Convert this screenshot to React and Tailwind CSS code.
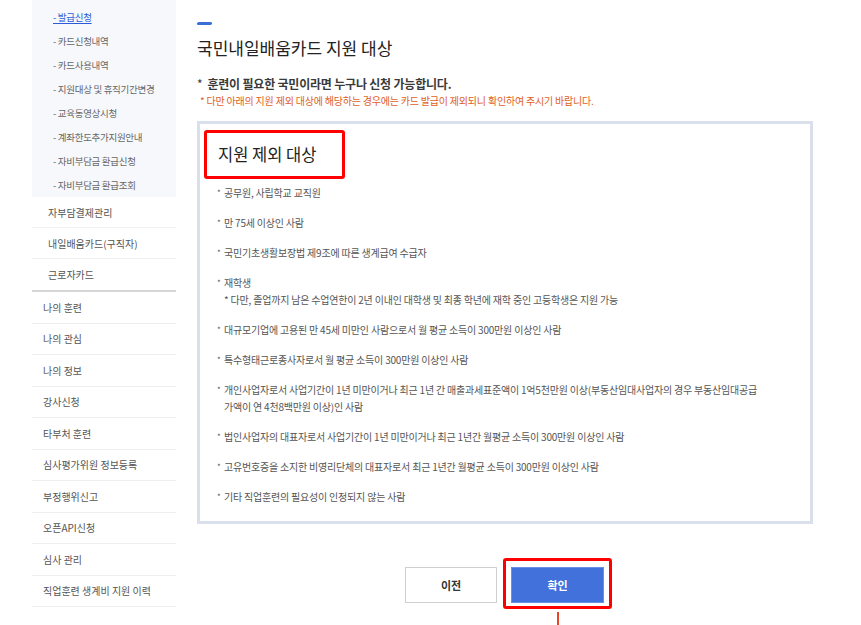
import React from 'react'

const SUB = [
    '- 발급신청',
    '- 카드신청내역',
    '- 카드사용내역',
    '- 지원대상 및 휴직기간변경',
    '- 교육동영상시청',
    '- 계좌한도추가지원안내',
    '- 자비부담금 환급신청',
    '- 자비부담금 환급조회',
]

const LEVEL2 = ['자부담결제관리', '내일배움카드(구직자)', '근로자카드']

const TOP = [
    '나의 훈련',
    '나의 관심',
    '나의 정보',
    '강사신청',
    '타부처 훈련',
    '심사평가위원 정보등록',
    '부정행위신고',
    '오픈API신청',
    '심사 관리',
    '직업훈련 생계비 지원 이력',
]

// each entry = rendered lines of one bullet
const EXCLUDED = [
    ['공무원, 사립학교 교직원'],
    ['만 75세 이상인 사람'],
    ['국민기초생활보장법 제9조에 따른 생계급여 수급자'],
    ['재학생', '* 다만, 졸업까지 남은 수업연한이 2년 이내인 대학생 및 최종 학년에 재학 중인 고등학생은 지원 가능'],
    ['대규모기업에 고용된 만 45세 미만인 사람으로서 월 평균 소득이 300만원 이상인 사람'],
    ['특수형태근로종사자로서 월 평균 소득이 300만원 이상인 사람'],
    ['개인사업자로서 사업기간이 1년 미만이거나 최근 1년 간 매출과세표준액이 1억5천만원 이상(부동산임대사업자의 경우 부동산임대공급', '가액이 연 4천8백만원 이상)인 사람'],
    ['법인사업자의 대표자로서 사업기간이 1년 미만이거나 최근 1년간 월평균 소득이 300만원 이상인 사람'],
    ['고유번호증을 소지한 비영리단체의 대표자로서 최근 1년간 월평균 소득이 300만원 이상인 사람'],
    ['기타 직업훈련의 필요성이 인정되지 않는 사람'],
]

function Sidebar() {
    return (
        <aside className="ml-[32px] w-[144px] shrink-0">
            {/* sub menu */}
            <ul className="bg-[#f6f8fc] pt-[5px]">
                {SUB.map((s, i) => (
                    <li key={s} className="h-[24px] flex items-center pl-[21px] text-[9.5px] tracking-[-0.3px]">
                        <span className={i === 0 ? 'text-[#2a5bd8] underline underline-offset-2' : 'text-[#666]'}>{s}</span>
                    </li>
                ))}
            </ul>
            <ul>
                {LEVEL2.map((s, i) => (
                    <li key={s}
                        className={`h-[31px] flex items-center pl-[16px] text-[10px] text-[#555] ${i < 2 ? 'border-b border-[#f0f0f0]' : ''}`}>
                        {s}
                    </li>
                ))}
            </ul>
            <div className="h-[2px] bg-[#d6d6d6]" />
            <ul>
                {TOP.map(s => (
                    <li key={s} className="h-[31.5px] flex items-center pl-[11px] text-[10px] text-[#555] border-b border-[#eeeeee]">
                        {s}
                    </li>
                ))}
            </ul>
        </aside>
    )
}

export default function App() {
    return (
        <div className="w-[861px] h-[625px] overflow-hidden bg-white flex" style={{ fontFamily: '"Noto Sans CJK KR", "Noto Sans", sans-serif' }}>
            <Sidebar />

            <main className="ml-[21px] w-[616px] shrink-0">
                <div className="mt-[22px] w-[15px] h-[3px] bg-[#3b6fd8] rounded-sm -skew-x-12" />
                <h1 className="mt-[11px] text-[17px] leading-[24px] text-[#222] font-normal">국민내일배움카드 지원 대상</h1>

                <p className="mt-[16px] text-[12px] leading-[16px] font-bold text-[#3a3a3a] tracking-[-0.2px]">
                    <span className="font-normal mr-[5px]">*</span>훈련이 필요한 국민이라면 누구나 신청 가능합니다.
                </p>
                <p className="mt-[2px] ml-[3px] text-[10px] leading-[14px] text-[#e0601e] tracking-[-0.2px]">
                    * 다만 아래의 지원 제외 대상에 해당하는 경우에는 카드 발급이 제외되니 확인하여 주시기 바랍니다.
                </p>

                {/* exclusion box */}
                <section className="mt-[13px] h-[403px] border-[3px] border-[#d9e0ec] pt-[6px] pl-[4px] pr-[8px]">
                    <div className="w-[141px] h-[49px] border-[3px] border-[#ff0000] rounded-[3px] flex items-center pl-[11px]">
                        <h2 className="text-[16.5px] text-[#222] font-normal">지원 제외 대상</h2>
                    </div>
                    <ul className="mt-[5px] pl-[13px] flex flex-col gap-[13px]">
                        {EXCLUDED.map(lines => (
                            <li key={lines[0]} className="flex text-[10px] leading-[17px] text-[#555] tracking-[-0.2px]">
                                <span className="w-[7px] shrink-0 text-[8px]">*</span>
                                <div>
                                    {lines.map((l, i) => (
                                        <p key={i} className="whitespace-nowrap">{l}</p>
                                    ))}
                                </div>
                            </li>
                        ))}
                    </ul>
                </section>

                {/* buttons */}
                <div className="mt-[34px] ml-[208px] flex items-start gap-[6px]">
                    <button className="mt-[9px] w-[92px] h-[36px] border border-[#cfcfcf] bg-white text-[11px] font-bold text-[#333]">이전</button>
                    <div className="flex flex-col items-center">
                        <div className="border-[3px] border-[#ff0000] rounded-[3px] pt-[6px] pb-[3px] px-[5px]">
                            <button className="w-[93px] h-[36px] bg-[#4271dc] border border-[#6a8fe6] text-[11px] font-bold text-white">확인</button>
                        </div>
                        <div className="mt-[3px] w-[2px] h-[20px] bg-[#e8442a]" />
                    </div>
                </div>
            </main>
        </div>
    )
}
